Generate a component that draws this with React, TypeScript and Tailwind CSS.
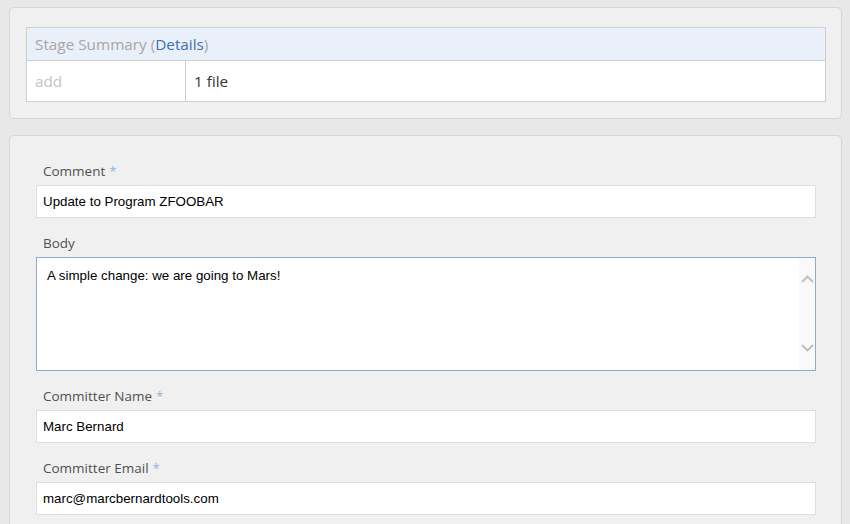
import React from "react";

const labelFont = { fontFamily: '"Open Sans", "Noto Sans", sans-serif' };

function Label({ text, required }: { text: string; required?: boolean }) {
  return (
    <div className="px-[7px] pb-[4px] pt-[1px] text-[13.5px] leading-[20px] text-[#505050]" style={labelFont}>
      {text}
      {required && <span className="ml-[4px] text-[#8fb3d9]">*</span>}
    </div>
  );
}

function Input({ value }: { value: string }) {
  return (
    <div className="flex h-[33px] items-center border border-[#dedede] bg-white px-[6px] font-['Liberation_Sans',Arial,sans-serif] text-[13.33px] text-black">
      {value}
    </div>
  );
}

export default function App() {
  return (
    <main className="min-h-screen overflow-hidden bg-[#e8e8e8] pl-[9px] pr-[8px] pt-[7px]">
      {/* Stage summary */}
      <section className="rounded-[5px] border border-[#d6d6d6] bg-[#f0f0f0] pb-[16px] pl-[16px] pr-[15px] pt-[19px]">
        <table className="w-full border-collapse border border-[#cfcfcf] text-[15.3px]" style={labelFont}>
          <thead>
            <tr className="h-[33px] bg-[#eaf0f9]">
              <th colSpan={2} className="px-[8px] text-left font-normal text-[#a6a6a6]">
                Stage Summary (<span className="text-[#3c6fb3]">Details</span>)
              </th>
            </tr>
          </thead>
          <tbody>
            <tr className="h-[41px] bg-white">
              <td className="w-[159px] border-r border-t border-[#cfcfcf] px-[8px] text-[#c4c4c4]">add</td>
              <td className="border-t border-[#cfcfcf] px-[8px] text-[#333]">1 file</td>
            </tr>
          </tbody>
        </table>
      </section>

      {/* Commit form */}
      <section className="mt-[16px] h-[400px] rounded-t-[5px] border border-[#d6d6d6] bg-[#f0f0f0] pl-[26px] pr-[25px] pt-[24px]">
        <Label text="Comment" required />
        <Input value="Update to Program ZFOOBAR" />

        <div className="mt-[14px]">
          <Label text="Body" />
          <div className="relative h-[114px] border border-[#8eaad3] bg-white">
            <div className="px-[10px] pt-[8px] font-['Liberation_Sans',Arial,sans-serif] text-[13.33px] text-black">
              A simple change: we are going to Mars!
            </div>
            <div className="absolute bottom-0 right-0 top-0 flex w-[16px] flex-col items-center justify-between bg-[#f9f9f9] pb-[18px] pt-[17px]">
              <svg width="13" height="8" viewBox="0 0 13 8" fill="none" stroke="#bdbdbd" strokeWidth="1.8">
                <path d="M1 7 L6.5 1.5 L12 7" />
              </svg>
              <svg width="13" height="8" viewBox="0 0 13 8" fill="none" stroke="#bdbdbd" strokeWidth="1.8">
                <path d="M1 1 L6.5 6.5 L12 1" />
              </svg>
            </div>
          </div>
        </div>

        <div className="mt-[14px]">
          <Label text="Committer Name" required />
          <Input value="Marc Bernard" />
        </div>

        <div className="mt-[14px]">
          <Label text="Committer Email" required />
          <Input value="marc@marcbernardtools.com" />
        </div>
      </section>
    </main>
  );
}
